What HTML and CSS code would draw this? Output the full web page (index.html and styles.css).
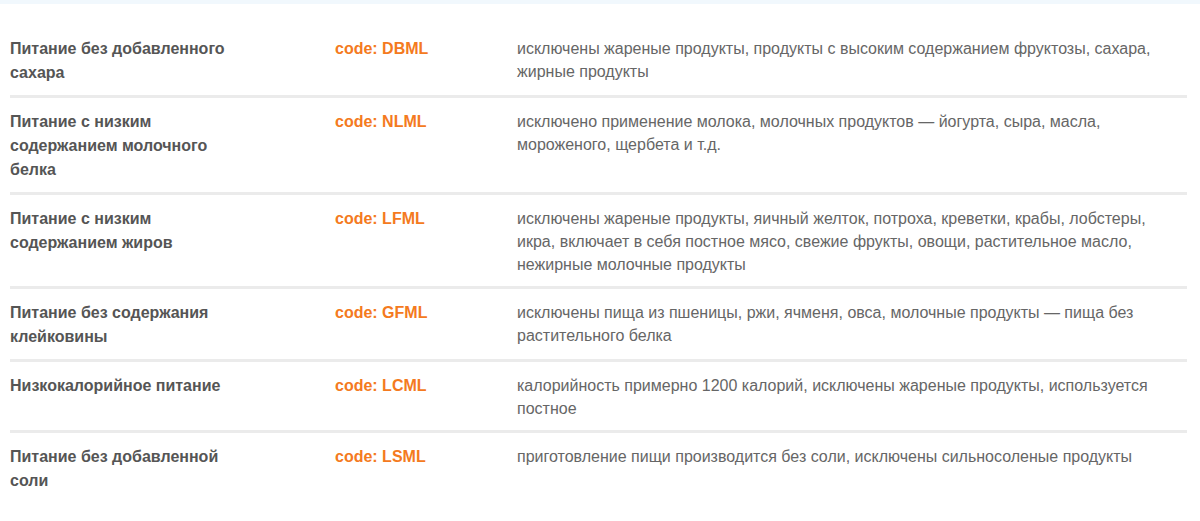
FILE: index.html
```html
<!DOCTYPE html>
<html lang="ru">
<head>
<meta charset="utf-8">
<link rel="stylesheet" href="styles.css">
</head>
<body>
<div class="strip"></div>
<div class="wrap">
  <div class="row">
    <div class="name">Питание без добавленного сахара</div>
    <div class="code">code: DBML</div>
    <div class="desc">исключены жареные продукты, продукты с высоким содержанием фруктозы, сахара, жирные продукты</div>
  </div>
  <div class="row">
    <div class="name">Питание с низким содержанием молочного белка</div>
    <div class="code">code: NLML</div>
    <div class="desc">исключено применение молока, молочных продуктов — йогурта, сыра, масла, мороженого, щербета и т.д.</div>
  </div>
  <div class="row">
    <div class="name">Питание с низким содержанием жиров</div>
    <div class="code">code: LFML</div>
    <div class="desc">исключены жареные продукты, яичный желток, потроха, креветки, крабы, лобстеры, икра, включает в себя постное мясо, свежие фрукты, овощи, растительное масло, нежирные молочные продукты</div>
  </div>
  <div class="row">
    <div class="name">Питание без содержания клейковины</div>
    <div class="code">code: GFML</div>
    <div class="desc">исключены пища из пшеницы, ржи, ячменя, овса, молочные продукты — пища без растительного белка</div>
  </div>
  <div class="row">
    <div class="name">Низкокалорийное питание</div>
    <div class="code">code: LCML</div>
    <div class="desc">калорийность примерно 1200 калорий, исключены жареные продукты, используется постное</div>
  </div>
  <div class="row last">
    <div class="name">Питание без добавленной соли</div>
    <div class="code">code: LSML</div>
    <div class="desc">приготовление пищи производится без соли, исключены сильносоленые продукты</div>
  </div>
</div>
</body>
</html>
```

FILE: styles.css
```css
html, body {
  margin: 0;
  padding: 0;
  background: #ffffff;
}
body {
  font-family: "Liberation Sans", Arial, sans-serif;
  font-size: 16px;
  line-height: 23px;
  color: #666666;
}
.strip {
  height: 4px;
  background: #f1f8fd;
}
.wrap {
  margin: 21px 0 0 10px;
  width: 1177px;
}
.row {
  display: grid;
  grid-template-columns: 325px 182px 1fr;
  padding: 12px 0 10px;
  border-bottom: 3px solid #ebebeb;
}
.row.last {
  border-bottom: none;
}
.name {
  font-weight: bold;
  color: #555555;
  line-height: 24px;
  padding-right: 100px;
}
.code {
  font-weight: bold;
  color: #f47a20;
  line-height: 24px;
}
.desc {
  color: #666666;
  padding-right: 20px;
}
```
